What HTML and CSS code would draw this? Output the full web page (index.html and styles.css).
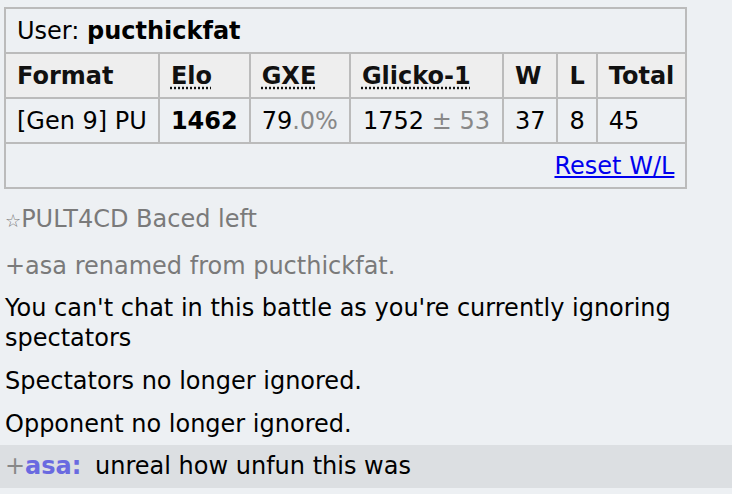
FILE: index.html
```html
<!DOCTYPE html>
<html>
<head>
<meta charset="utf-8">
<link rel="stylesheet" href="styles.css">
</head>
<body>
<div class="log">
  <table class="ladder">
    <tr><td colspan="7" class="user">User: <strong>pucthickfat</strong></td></tr>
    <tr>
      <th>Format</th>
      <th><abbr title="Elo rating">Elo</abbr></th>
      <th><abbr title="user's percentage chance of winning a random battle">GXE</abbr></th>
      <th><abbr title="Glicko-1 rating: rating±deviation">Glicko-1</abbr></th>
      <th>W</th>
      <th>L</th>
      <th>Total</th>
    </tr>
    <tr>
      <td>[Gen 9] PU</td>
      <td><strong>1462</strong></td>
      <td>79<span class="dim">.0%</span></td>
      <td class="center glicko">1752 <span class="dim">± 53</span></td>
      <td>37</td>
      <td>8</td>
      <td>45</td>
    </tr>
    <tr><td colspan="7" class="right"><a href="#">Reset W/L</a></td></tr>
  </table>
  <div class="notice"><span class="star">☆</span>PULT4CD Baced left</div>
  <div class="notice">+asa renamed from pucthickfat.</div>
  <div class="msg">You can't chat in this battle as you're currently ignoring spectators</div>
  <div class="msg">Spectators no longer ignored.</div>
  <div class="msg">Opponent no longer ignored.</div>
  <div class="chat"><span class="rank">+</span><strong class="name">asa:</strong> <em class="text">unreal how unfun this was</em></div>
</div>
</body>
</html>
```
FILE: styles.css
```css
html, body {
  margin: 0;
  padding: 0;
  background: #edf0f3;
}
body {
  font-family: "DejaVu Sans", Verdana, sans-serif;
  font-size: 24px;
  line-height: 30px;
  color: #000;
}
.log {
  padding: 7px 0 0 0;
}
.ladder {
  margin: 0 0 4px 4px;
  border-collapse: collapse;
  border: 2px solid #bbb;
}
.ladder td, .ladder th {
  border: 2px solid #bbb;
  padding: 7px 11px 6px 11px;
  text-align: left;
  white-space: nowrap;
}
.ladder th {
  background: #eeeeee;
  color: #111;
  font-weight: bold;
}
.ladder td.glicko {
  padding-left: 12px;
  padding-right: 12px;
}
.ladder abbr {
  text-decoration: underline dotted;
  text-underline-offset: 3px;
}
.ladder .center { text-align: center; }
.ladder .right { text-align: right; }
.ladder a { color: #0000ee; }
.dim { color: #888; }
.notice {
  color: #7a7a7a;
  padding: 11px 5px 5px 5px;
}
.notice + .notice {
  padding-top: 12px;
}
.star {
  font-size: 18px;
  line-height: 0;
}
.msg {
  padding: 7px 5px 6px 5px;
}
.chat {
  background: #dcdfe2;
  padding: 6px 5px 7px 5px;
}
.rank { color: #888; }
.name { color: #6a6ae0; font-weight: bold; margin-right: 6px; }
.text { font-style: normal; }
```
